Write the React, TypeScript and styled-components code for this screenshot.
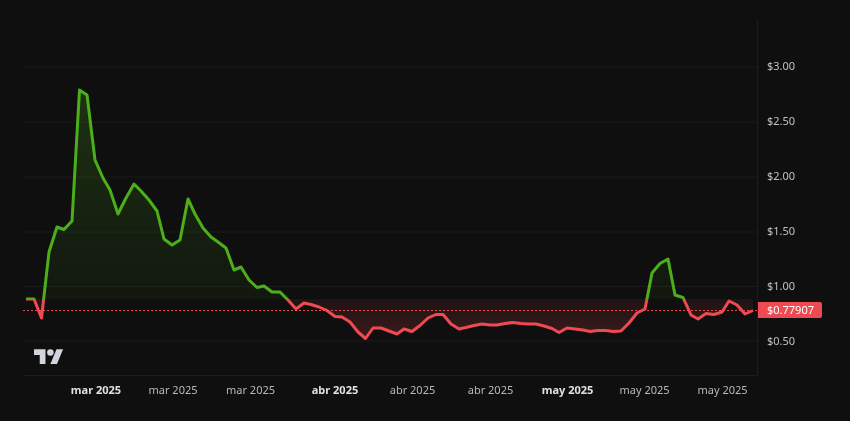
import React from "react";
import styled, { createGlobalStyle } from "styled-components";

const Global = createGlobalStyle`
  html, body { margin: 0; padding: 0; background: #0f0f0f; }
  body { font-family: "Noto Sans", "Open Sans", sans-serif; }
`;

const Page = styled.div`
  width: 850px;
  height: 421px;
  box-sizing: border-box;
  padding: 20px 0 0 23px;
  background: #0f0f0f;
  overflow: hidden;
`;

const ChartRow = styled.div`
  display: flex;
  height: 356px;
`;

const Pane = styled.div`
  position: relative;
  width: 734px;
  height: 356px;
  box-sizing: border-box;
  border-bottom: 1px solid #1c1c1c;
`;

const PlotSvg = styled.svg`
  display: block;
`;

const Logo = styled.svg`
  position: absolute;
  left: 11px;
  top: 326px;
  fill: #d1d4dc;
`;

const PriceAxis = styled.div`
  position: relative;
  flex: 0 0 93px;
  box-sizing: border-box;
  border-left: 1px solid #1c1c1c;
  padding: 18px 0 0 9px;
  display: flex;
  flex-direction: column;
  will-change: transform;
`;

const PriceLabel = styled.div`
  height: 55px;
  line-height: 55px;
  font-size: 11px;
  color: #c0c0c0;
`;

const PriceTag = styled.div`
  position: absolute;
  left: 0;
  top: 282px;
  width: 64px;
  height: 16px;
  box-sizing: border-box;
  padding-left: 9px;
  line-height: 16px;
  font-size: 11px;
  color: #fff;
  background: #ef4a52;
  border-radius: 0 2px 2px 0;
`;

const TimeAxis = styled.div`
  display: flex;
  padding-top: 5px;
  margin-left: 33.5px;
  will-change: transform;
`;

const TimeLabel = styled.div<{ $w: number; $major?: boolean }>`
  flex: 0 0 ${(p) => p.$w}px;
  text-align: center;
  font-size: 11px;
  line-height: 18px;
  white-space: nowrap;
  font-weight: ${(p) => (p.$major ? 700 : 400)};
  color: ${(p) => (p.$major ? "#e0e0e0" : "#b8b8b8")};
`;

const pts: [number, number][] = [
  [26, 299], [34, 299], [41.5, 318], [49, 252], [57, 227], [64, 229.5], [72, 221], [79.5, 90], [87, 95], [95, 160],
  [103, 178], [110, 190], [118, 214], [126, 198], [134, 184], [141, 191], [149, 200], [157, 211], [164, 239], [172, 245],
  [180, 240], [188, 199], [195, 214], [203, 228], [211, 237], [218, 242], [226, 248], [234, 270], [241, 267], [249, 280],
  [257, 287.5], [264, 286], [272, 292], [280, 292], [288, 300], [296, 309], [304, 303], [311, 304.5], [319, 307], [327, 310.5],
  [335, 316.5], [342, 317], [350, 322], [358, 332], [365.5, 338.5], [373, 328], [381, 328], [389, 331], [397, 334], [404, 329],
  [412, 331.5], [420, 325.5], [428, 318], [436, 314.5], [443, 314.5], [451, 324], [459, 329], [466, 327.5], [474, 325.5], [482, 324],
  [490, 325], [497, 325], [505, 323.5], [513, 322.5], [521, 323.5], [528, 324], [536, 324], [544, 326], [552, 328.5], [559, 332.5],
  [567, 328], [575, 329], [583, 330], [590, 331.5], [598, 330.5], [606, 330.5], [613, 331.5], [621, 331], [629, 323], [637, 313],
  [645, 309], [652, 273], [660, 263.5], [668, 259], [675, 295], [683, 297.5], [691, 315], [698, 319], [706, 313.5], [714, 314.5],
  [722, 312], [729, 301], [737, 305], [745, 314], [753, 310.5],
];
const BASE = 299;
const linePath = pts.map((p, i) => `${i ? "L" : "M"}${p[0]} ${p[1]}`).join(" ");
const areaPath = `${linePath} L753 ${BASE} L26 ${BASE} Z`;
const gridYs = [67, 122, 177, 232, 286.5, 341];
const prices = ["$3.00", "$2.50", "$2.00", "$1.50", "$1.00", "$0.50"];
const times: { t: string; w: number; major?: boolean }[] = [
  { t: "mar 2025", w: 78, major: true },
  { t: "mar 2025", w: 76 },
  { t: "mar 2025", w: 79 },
  { t: "abr 2025", w: 90, major: true },
  { t: "abr 2025", w: 65 },
  { t: "abr 2025", w: 91 },
  { t: "may 2025", w: 63, major: true },
  { t: "may 2025", w: 91 },
  { t: "may 2025", w: 65 },
];

export default function App() {
  return (
    <Page>
      <Global />
      <ChartRow>
        <Pane>
          <PlotSvg width={734} height={355} viewBox="23 20 734 355">
            <defs>
              <linearGradient id="gf" gradientUnits="userSpaceOnUse" x1="0" y1="90" x2="0" y2="299">
                <stop offset="0" stopColor="#4caf1a" stopOpacity="0.22" />
                <stop offset="1" stopColor="#4caf1a" stopOpacity="0.05" />
              </linearGradient>
              <linearGradient id="rf" gradientUnits="userSpaceOnUse" x1="0" y1="299" x2="0" y2="339">
                <stop offset="0" stopColor="#ef4a52" stopOpacity="0.07" />
                <stop offset="1" stopColor="#ef4a52" stopOpacity="0.2" />
              </linearGradient>
              <clipPath id="up"><rect x="0" y="0" width="800" height={BASE} /></clipPath>
              <clipPath id="down"><rect x="0" y={BASE} width="800" height="200" /></clipPath>
            </defs>
            {gridYs.map((y) => (
              <line key={y} x1="23" x2="757" y1={y} y2={y} stroke="#1b1b1b" strokeWidth="1" />
            ))}
            <path d={areaPath} fill="url(#gf)" clipPath="url(#up)" />
            <path d={areaPath} fill="url(#rf)" clipPath="url(#down)" />
            <line x1="23" x2="757" y1="310.5" y2="310.5" stroke="#ef4a52" strokeWidth="1" strokeDasharray="2 2" />
            <path d={linePath} fill="none" stroke="#4caf1a" strokeWidth="3" strokeLinejoin="round" clipPath="url(#up)" />
            <path d={linePath} fill="none" stroke="#ef4a52" strokeWidth="3" strokeLinejoin="round" clipPath="url(#down)" />
          </PlotSvg>
          <Logo width="29.5" height="23" viewBox="0 0 36 28">
            <path d="M14 22H7V11H0V4h14v18zM28 22h-8l7.5-18h8L28 22z" />
            <circle cx="20" cy="8" r="4" />
          </Logo>
        </Pane>
        <PriceAxis>
          {prices.map((p) => (
            <PriceLabel key={p}>{p}</PriceLabel>
          ))}
          <PriceTag>$0.77907</PriceTag>
        </PriceAxis>
      </ChartRow>
      <TimeAxis>
        {times.map((x, i) => (
          <TimeLabel key={i} $w={x.w} $major={x.major}>
            {x.t}
          </TimeLabel>
        ))}
      </TimeAxis>
    </Page>
  );
}
